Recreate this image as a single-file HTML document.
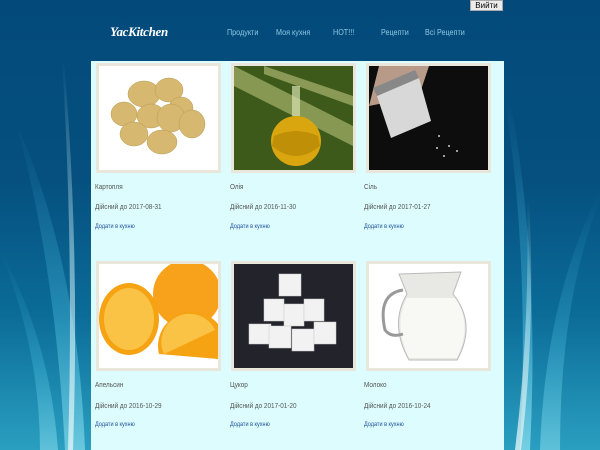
<!DOCTYPE html>
<html><head><meta charset="utf-8"><style>
*{margin:0;padding:0;box-sizing:border-box}
body{width:600px;height:450px;overflow:hidden;position:relative;font-family:"Liberation Sans",sans-serif;background:linear-gradient(180deg,#034a7a 0%,#05507f 40%,#0b6c98 70%,#2a9fc0 100%)}
.bg{position:absolute;left:0;top:0}
.logo{position:absolute;left:110px;top:24px;color:#fff;font:italic bold 13px "Liberation Serif",serif;letter-spacing:-0.3px}
.nav{position:absolute;top:28px;font-size:8px;color:#8ec8e4;transform:scaleX(.9);transform-origin:left}
.btn{position:absolute;left:470px;top:0;width:33px;height:11px;background:#ececec;border:1px solid #aaa;font-size:8px;text-align:center;line-height:10px;color:#000}
.panel{position:absolute;left:91px;top:61px;width:413px;height:389px;background:#dcfcfd}
.card{position:absolute;width:125px}
.frame{width:125px;height:110px;border:3px solid #e9e6dc;background:#fff;overflow:hidden}
.frame svg{display:block}
.n{position:absolute;font-size:7.5px;color:#555;transform:scaleX(.85);transform-origin:left;white-space:nowrap}
.l{position:absolute;font-size:6.5px;color:#1f4f9a;transform:scaleX(.85);transform-origin:left;white-space:nowrap}
</style></head><body>
<svg class="bg" width="600" height="450">
<defs><linearGradient id="g" x1="0" y1="0" x2="0" y2="1"><stop offset="0" stop-color="#4fc9f0" stop-opacity="0"/><stop offset="0.6" stop-color="#5fd8f5" stop-opacity=".5"/><stop offset="1" stop-color="#aef5ff" stop-opacity=".8"/></linearGradient>
<linearGradient id="w" x1="0" y1="0" x2="0" y2="1"><stop offset="0" stop-color="#cfeef5" stop-opacity="0"/><stop offset=".5" stop-color="#cfeef5" stop-opacity=".5"/><stop offset="1" stop-color="#e0f4f6" stop-opacity=".8"/></linearGradient></defs>
<path d="M15 120 Q55 260 65 450 L85 450 Q78 260 15 120Z" fill="url(#g)" opacity=".6"/>
<path d="M62 60 Q74 250 68 450 L73 450 Q80 250 64 60Z" fill="url(#w)"/>
<path d="M0 250 Q40 350 40 450 L58 450 Q50 340 0 250Z" fill="url(#g)" opacity=".5"/>
<path d="M505 100 Q530 260 520 450 L530 450 Q540 260 510 100Z" fill="url(#g)" opacity=".7"/>
<path d="M527 200 Q530 330 515 450 L521 450 Q536 330 529 200Z" fill="url(#w)"/>
<path d="M600 190 Q545 300 540 450 L560 450 Q560 300 600 200Z" fill="url(#g)" opacity=".5"/>
</svg>
<div class="btn">Вийти</div>
<div class="logo">YacKitchen</div>
<div class="nav" style="left:227px">Продукти</div>
<div class="nav" style="left:276px">Моя кухня</div>
<div class="nav" style="left:333px">HOT!!!</div>
<div class="nav" style="left:381px">Рецепти</div>
<div class="nav" style="left:425px">Всі Рецепти</div>
<div class="panel">
<div class="card" style="left:5px;top:2px"><div class="frame"><svg width="119" height="104"><g fill="#d6b870" stroke="#b89a50" stroke-width=".5">
<ellipse cx="45" cy="28" rx="16" ry="13"/><ellipse cx="70" cy="24" rx="14" ry="12"/><ellipse cx="82" cy="42" rx="12" ry="11"/><ellipse cx="25" cy="48" rx="13" ry="12"/><ellipse cx="52" cy="50" rx="14" ry="12"/><ellipse cx="72" cy="52" rx="14" ry="14"/><ellipse cx="93" cy="58" rx="13" ry="14"/><ellipse cx="35" cy="68" rx="14" ry="12"/><ellipse cx="63" cy="76" rx="15" ry="12"/></g></svg></div></div>
<div class="card" style="left:140px;top:2px"><div class="frame"><svg width="119" height="104"><rect width="119" height="104" fill="#3d5a1a"/><path d="M0 0 L119 60 L119 80 L0 20Z" fill="#b9c27a" opacity=".6"/><path d="M30 0 L119 30 L119 40 L30 8Z" fill="#d8d890" opacity=".5"/><rect x="58" y="20" width="8" height="30" fill="#d9e0b0" opacity=".7"/><circle cx="62" cy="75" r="25" fill="#d9a610"/><path d="M40 70 Q62 60 84 70 L86 80 Q62 100 38 80Z" fill="#a87800" opacity=".5"/></svg></div></div>
<div class="card" style="left:275px;top:2px"><div class="frame"><svg width="119" height="104"><rect width="119" height="104" fill="#0d0d0d"/><path d="M10 0 L60 0 L50 30 L0 40Z" fill="#b89a88"/><path d="M8 30 L50 12 L62 55 L22 72Z" fill="#d8d8d8"/><path d="M8 30 L50 12 L46 4 L4 22Z" fill="#888"/><g fill="#ccc"><circle cx="70" cy="70" r="1"/><circle cx="80" cy="80" r="1"/><circle cx="75" cy="90" r="1"/><circle cx="88" cy="85" r="1"/><circle cx="68" cy="82" r="1"/></g></svg></div></div>
<div class="n" style="left:4px;top:121px">Картопля</div><div class="n" style="left:4px;top:141px">Дійсний до 2017-08-31</div><div class="l" style="left:4px;top:162px">Додати в кухню</div>
<div class="n" style="left:139px;top:121px">Олія</div><div class="n" style="left:139px;top:141px">Дійсний до 2016-11-30</div><div class="l" style="left:139px;top:162px">Додати в кухню</div>
<div class="n" style="left:273px;top:121px">Сіль</div><div class="n" style="left:273px;top:141px">Дійсний до 2017-01-27</div><div class="l" style="left:273px;top:162px">Додати в кухню</div>

<div class="card" style="left:5px;top:200px"><div class="frame"><svg width="119" height="104"><circle cx="88" cy="30" r="34" fill="#f7a21a"/><ellipse cx="30" cy="55" rx="30" ry="36" fill="#f5a313"/><ellipse cx="30" cy="55" rx="25" ry="31" fill="#fbc346"/><path d="M60 90 A34 34 0 0 1 119 60 L119 95Z" fill="#f5a313"/><path d="M65 90 A28 28 0 0 1 116 66 Z" fill="#fbc346"/></svg></div></div>
<div class="card" style="left:140px;top:200px"><div class="frame"><svg width="119" height="104"><rect width="119" height="104" fill="#23232b"/><g fill="#f2f2f2" stroke="#ccc" stroke-width=".5"><rect x="45" y="10" width="22" height="22"/><rect x="30" y="35" width="20" height="22"/><rect x="50" y="40" width="20" height="22"/><rect x="70" y="35" width="20" height="22"/><rect x="15" y="60" width="22" height="20"/><rect x="35" y="62" width="22" height="22"/><rect x="58" y="65" width="22" height="22"/><rect x="80" y="58" width="22" height="22"/></g></svg></div></div>
<div class="card" style="left:275px;top:200px"><div class="frame"><svg width="119" height="104"><path d="M30 10 L92 8 L84 30 Q108 60 88 96 L40 96 Q20 60 38 30Z" fill="#e8e8e4" stroke="#bbb"/><path d="M38 34 Q24 60 40 94 L88 94 Q104 60 86 34Z" fill="#f8f8f4"/><path d="M34 26 Q8 30 16 66 Q22 74 34 70" fill="none" stroke="#999" stroke-width="3"/></svg></div></div>
<div class="n" style="left:4px;top:319px">Апельсин</div><div class="n" style="left:4px;top:340px">Дійсний до 2016-10-29</div><div class="l" style="left:4px;top:360px">Додати в кухню</div>
<div class="n" style="left:139px;top:319px">Цукор</div><div class="n" style="left:139px;top:340px">Дійсний до 2017-01-20</div><div class="l" style="left:139px;top:360px">Додати в кухню</div>
<div class="n" style="left:273px;top:319px">Молоко</div><div class="n" style="left:273px;top:340px">Дійсний до 2016-10-24</div><div class="l" style="left:273px;top:360px">Додати в кухню</div>
</div>
</body></html>
